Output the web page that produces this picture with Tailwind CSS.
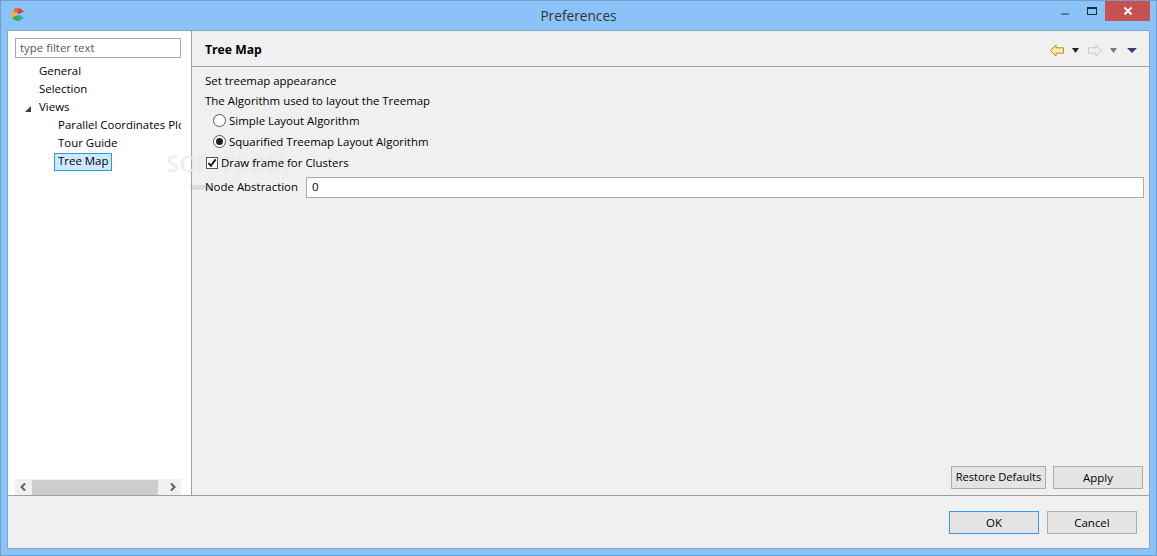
<!DOCTYPE html>
<html>
<head>
<meta charset="utf-8">
<title>Preferences</title>
<script src="https://cdn.jsdelivr.net/npm/@tailwindcss/browser@4"></script>
</head>
<body class="bg-[#8ac3f8]">
<div class="relative w-[1157px] h-[556px] overflow-hidden flex flex-col border border-[#6f9fce] bg-[#8ac3f8] font-['Open_Sans',sans-serif] text-[11.45px] text-black">

  <!-- title bar -->
  <div class="relative h-[29px] shrink-0 flex items-center justify-center pt-[2px] text-[13.7px] text-[#333]">
    <svg class="absolute left-[9px] top-[6px]" width="14" height="15" viewBox="0 0 14 15">
      <path d="M5 1L9 1L7 5.5L3 5.5Z" fill="#ef6c3a"/>
      <path d="M9 1L14 4.5L9 7L7 5.5Z" fill="#e8343c"/>
      <path d="M3 5.5L7 5.5L5 10L1 10L1 7Z" fill="#f7b62f"/>
      <path d="M5 9L9 8L9 14L6 14L2 11Z" fill="#3fae4a"/>
      <path d="M9 8L14 10.5L9 14.5Z" fill="#2fa6e0"/>
    </svg>
    <span>Preferences</span>
    <div class="absolute right-[6px] top-0 flex items-start">
      <div class="w-[28px] h-[20px] flex items-center justify-center pt-[6px]"><div class="w-[8px] h-[2px] bg-[#5c7f9f]"></div></div>
      <div class="w-[26px] h-[20px] flex items-center justify-center"><div class="w-[10px] h-[8px] border border-t-2 border-[#1f2a38]"></div></div>
      <div class="w-[45px] h-[20px] bg-[#c75050] flex items-center justify-center">
        <svg width="10" height="10" viewBox="0 0 10 10"><path d="M1.5 1.5L8.5 8.5M8.5 1.5L1.5 8.5" stroke="#fff" stroke-width="2"/></svg>
      </div>
    </div>
  </div>

  <!-- client area -->
  <div class="mx-[6px] mb-[6px] flex-1 flex flex-col border border-[#8ba6bf] bg-[#f0f0f0] min-h-0">
    <div class="flex flex-1 min-h-0 border-b border-[#a0a0a0]">

      <!-- tree panel -->
      <div class="w-[184px] shrink-0 bg-white border-r border-[#a0a0a0] flex flex-col pl-[7px] pr-[10px] pt-[7px]">
        <div class="h-[20px] border border-[#ababab] px-[4px] flex items-center text-[#5a5a5a]">type filter text</div>
        <div class="flex-1 flex flex-col pt-[4px] overflow-hidden">
          <div class="h-[18px] pl-[24px] flex items-center">General</div>
          <div class="h-[18px] pl-[24px] flex items-center">Selection</div>
          <div class="relative h-[18px] pl-[24px] flex items-center">
            <svg class="absolute left-[10px] top-[8px]" width="6" height="6" viewBox="0 0 6 6"><path d="M0 6L6 0V6Z" fill="#404040"/></svg>
            Views
          </div>
          <div class="h-[18px] pl-[43px] flex items-center whitespace-nowrap overflow-hidden">Parallel Coordinates Plc</div>
          <div class="h-[18px] pl-[43px] flex items-center">Tour Guide</div>
          <div class="h-[18px] mt-[1px] pl-[39px] flex items-center">
            <span class="h-[18px] px-[3px] pb-[2px] flex items-center bg-[#cde8ff] border border-[#26a0da]">Tree Map</span>
          </div>
        </div>
        <div class="h-[16px] bg-[#f0f0f0] flex items-center justify-between">
          <svg class="ml-[5px]" width="6" height="8" viewBox="0 0 6 8"><path d="M5 0.5L1.5 4L5 7.5" fill="none" stroke="#606060" stroke-width="2"/></svg>
          <div class="absolute left-[31px] w-[126px] h-[15px] bg-[#cdcdcd]"></div>
          <svg class="mr-[5px]" width="6" height="8" viewBox="0 0 6 8"><path d="M1 0.5L4.5 4L1 7.5" fill="none" stroke="#606060" stroke-width="2"/></svg>
        </div>
      </div>

      <!-- page panel -->
      <div class="flex-1 min-w-0 flex flex-col">
        <div class="h-[36px] shrink-0 border-b border-[#a0a0a0] pl-[13px] pr-[12px] pt-[3px] flex items-center justify-between">
          <span class="font-bold text-[12.2px]">Tree Map</span>
          <div class="flex items-center">
            <svg width="14" height="13" viewBox="0 0 14 13"><path d="M0.5 6.5L6 0.8V3.8H13.5V9.2H6V12.2Z" fill="#fde9a8" stroke="#c08a1e"/></svg>
            <svg class="ml-[8px]" width="7" height="5" viewBox="0 0 7 5"><path d="M0 0H7L3.5 5Z" fill="#222"/></svg>
            <svg class="ml-[9px]" width="14" height="13" viewBox="0 0 14 13"><path d="M13.5 6.5L8 0.8V3.8H0.5V9.2H8V12.2Z" fill="#efefef" stroke="#c8c8c8"/></svg>
            <svg class="ml-[8px]" width="7" height="5" viewBox="0 0 7 5"><path d="M0 0H7L3.5 5Z" fill="#777"/></svg>
            <svg class="ml-[10px]" width="10" height="5" viewBox="0 0 10 5"><path d="M0 0H10L5 5Z" fill="#3f3a6e"/></svg>
          </div>
        </div>

        <div class="flex-1 flex flex-col pl-[13px] pr-[5px] pt-[4px] min-h-0">
          <div class="h-[20px] flex items-center">Set treemap appearance</div>
          <div class="h-[19px] flex items-center">The Algorithm used to layout the Treemap</div>
          <div class="h-[21px] flex items-center pl-[8px] gap-[3px]">
            <span class="w-[13px] h-[13px] rounded-full border border-[#555] bg-white"></span>
            <span>Simple Layout Algorithm</span>
          </div>
          <div class="h-[21px] flex items-center pl-[8px] gap-[3px]">
            <span class="w-[13px] h-[13px] rounded-full border border-[#555] bg-white flex items-center justify-center"><span class="w-[7px] h-[7px] rounded-full bg-[#222]"></span></span>
            <span>Squarified Treemap Layout Algorithm</span>
          </div>
          <div class="relative z-10 h-[21px] flex items-center gap-[3px] pl-[1px]">
            <span class="w-[12px] h-[12px] border border-[#555] bg-white flex items-center justify-center">
              <svg width="10" height="10" viewBox="0 0 11 11"><path d="M1.5 5.5L4.2 8.5L9.5 1.5" fill="none" stroke="#111" stroke-width="2"/></svg>
            </span>
            <span>Draw frame for Clusters</span>
          </div>
          <div class="relative z-10 h-[24px] mt-[2px] flex items-center">
            <span class="w-[101px] shrink-0 whitespace-nowrap">Node Abstraction</span>
            <div class="flex-1 h-[21px] bg-white border border-[#ababab] px-[5px] flex items-center">0</div>
          </div>

          <div class="mt-auto mb-[6px] flex justify-end gap-[7px] pr-[1px]">
            <div class="w-[95px] h-[23px] border border-[#acacac] bg-[#e4e4e4] flex items-center justify-center text-[11.1px]">Restore Defaults</div>
            <div class="w-[90px] h-[23px] border border-[#acacac] bg-[#e4e4e4] flex items-center justify-center">Apply</div>
          </div>
        </div>
      </div>
    </div>

    <!-- dialog buttons -->
    <div class="h-[52px] shrink-0 flex items-start justify-end gap-[8px] pt-[15px] pr-[12px]">
      <div class="w-[90px] h-[23px] border border-[#3399ff] bg-[#e4e4e4] flex items-center justify-center">OK</div>
      <div class="w-[90px] h-[23px] border border-[#acacac] bg-[#e4e4e4] flex items-center justify-center">Cancel</div>
    </div>
  </div>

  <!-- watermark -->
  <div class="absolute left-[166px] top-[148px] text-[21px] tracking-[1.5px] text-white/70 [text-shadow:0_0_1px_#c8c8c8] pointer-events-none">SOFTPEDIA</div>
  <div class="absolute left-[189px] top-[179px] text-[9px] text-[#aaa]/70 pointer-events-none">www</div>
</div>
</body>
</html>
